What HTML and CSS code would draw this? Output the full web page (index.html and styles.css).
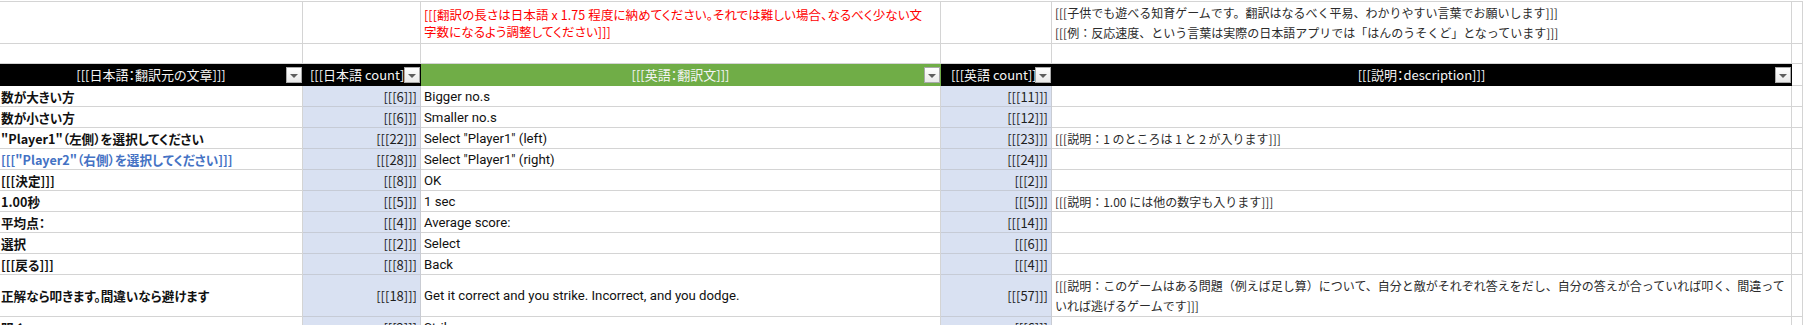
FILE: index.html
```html
<!DOCTYPE html>
<html lang="ja">
<head>
<meta charset="utf-8">
<title>翻訳シート</title>
<link rel="stylesheet" href="styles.css">
</head>
<body>
<div class="sheet">
  <!-- row 1 : notes -->
  <div class="c"></div>
  <div class="c"></div>
  <div class="c en"><div class="note-red">[[[翻訳の長さは日本語 x 1.75 程度に納めてください。それでは難しい場合、なるべく少ない文<br>字数になるよう調整してください]]]</div></div>
  <div class="c"></div>
  <div class="c desc"><div class="note">[[[子供でも遊べる知育ゲームです。翻訳はなるべく平易、わかりやすい言葉でお願いします]]]<br>[[[例：反応速度、という言葉は実際の日本語アプリでは「はんのうそくど」となっています]]]</div></div>
  <div class="c"></div>

  <!-- row 2 : empty -->
  <div class="c"></div>
  <div class="c"></div>
  <div class="c"></div>
  <div class="c"></div>
  <div class="c"></div>
  <div class="c"></div>

  <!-- header -->
  <div class="c h"><span>[[[日本語：翻訳元の文章]]]</span><i class="flt"></i></div>
  <div class="c h"><span>[[[日本語 count]]]</span><i class="flt"></i></div>
  <div class="c h green"><span>[[[英語：翻訳文]]]</span><i class="flt"></i></div>
  <div class="c h"><span>[[[英語 count]]]</span><i class="flt"></i></div>
  <div class="c h"><span>[[[説明：description]]]</span><i class="flt"></i></div>
  <div class="c"></div>

  <!-- data -->
  <div class="c ja">数が大きい方</div>
  <div class="c num">[[[6]]]</div>
  <div class="c en">Bigger no.s</div>
  <div class="c num">[[[11]]]</div>
  <div class="c desc"></div>
  <div class="c"></div>

  <div class="c ja">数が小さい方</div>
  <div class="c num">[[[6]]]</div>
  <div class="c en">Smaller no.s</div>
  <div class="c num">[[[12]]]</div>
  <div class="c desc"></div>
  <div class="c"></div>

  <div class="c ja">"Player1"（左側）を選択してください</div>
  <div class="c num">[[[22]]]</div>
  <div class="c en">Select "Player1" (left)</div>
  <div class="c num">[[[23]]]</div>
  <div class="c desc">[[[説明：1 のところは 1 と 2 が入ります]]]</div>
  <div class="c"></div>

  <div class="c ja blue">[[["Player2"（右側）を選択してください]]]</div>
  <div class="c num">[[[28]]]</div>
  <div class="c en">Select "Player1" (right)</div>
  <div class="c num">[[[24]]]</div>
  <div class="c desc"></div>
  <div class="c"></div>

  <div class="c ja">[[[決定]]]</div>
  <div class="c num">[[[8]]]</div>
  <div class="c en">OK</div>
  <div class="c num">[[[2]]]</div>
  <div class="c desc"></div>
  <div class="c"></div>

  <div class="c ja">1.00秒</div>
  <div class="c num">[[[5]]]</div>
  <div class="c en">1 sec</div>
  <div class="c num">[[[5]]]</div>
  <div class="c desc">[[[説明：1.00 には他の数字も入ります]]]</div>
  <div class="c"></div>

  <div class="c ja">平均点：</div>
  <div class="c num">[[[4]]]</div>
  <div class="c en">Average score:</div>
  <div class="c num">[[[14]]]</div>
  <div class="c desc"></div>
  <div class="c"></div>

  <div class="c ja">選択</div>
  <div class="c num">[[[2]]]</div>
  <div class="c en">Select</div>
  <div class="c num">[[[6]]]</div>
  <div class="c desc"></div>
  <div class="c"></div>

  <div class="c ja">[[[戻る]]]</div>
  <div class="c num">[[[8]]]</div>
  <div class="c en">Back</div>
  <div class="c num">[[[4]]]</div>
  <div class="c desc"></div>
  <div class="c"></div>

  <div class="c ja">正解なら叩きます。間違いなら避けます</div>
  <div class="c num">[[[18]]]</div>
  <div class="c en">Get it correct and you strike. Incorrect, and you dodge.</div>
  <div class="c num">[[[57]]]</div>
  <div class="c desc"><div class="note">[[[説明：このゲームはある問題（例えば足し算）について、自分と敵がそれぞれ答えをだし、自分の答えが合っていれば叩く、間違って<br>いれば逃げるゲームです]]]</div></div>
  <div class="c"></div>

  <div class="c ja">叩く</div>
  <div class="c num">[[[2]]]</div>
  <div class="c en">Strike</div>
  <div class="c num">[[[6]]]</div>
  <div class="c desc"></div>
  <div class="c"></div>
</div>
</body>
</html>
```

FILE: styles.css
```css
* {
  box-sizing: border-box;
}

html, body {
  margin: 0;
  padding: 0;
  background: #ffffff;
  overflow: hidden;
}

body {
  font-family: "Noto Sans CJK JP", sans-serif;
  font-size: 13px;
  color: #1a1a1a;
  font-feature-settings: "palt";
}

.sheet {
  display: grid;
  grid-template-columns: 303px 118px 520px 111px 740px 1fr;
  grid-template-rows: 42px 20px 22px repeat(9, 21px) 42px 21px;
  margin-top: 1px;
  border-top: 1px solid #d4d4d4;
}

.c {
  display: flex;
  align-items: center;
  min-width: 0;
  overflow: hidden;
  white-space: nowrap;
  border-right: 1px solid #d4d4d4;
  border-bottom: 1px solid #d4d4d4;
  line-height: 17px;
}

/* header row */
.h {
  position: relative;
  justify-content: center;
  background: #000000;
  border-color: #000000;
  color: #f4f4f4;
  font-size: 13px;
}

.h.green {
  background: #70ad47;
  border-right-color: #70ad47;
  border-bottom-color: #70ad47;
}

.flt {
  position: absolute;
  right: 0;
  top: 3px;
  width: 16px;
  height: 16px;
  border: 1px solid #a9a9a9;
  background: linear-gradient(#ffffff, #e9e9e9);
}

.flt::after {
  content: "";
  position: absolute;
  left: 3px;
  top: 6px;
  border-left: 4px solid transparent;
  border-right: 4px solid transparent;
  border-top: 4px solid #5e5e5e;
}

/* Japanese source column */
.ja {
  padding-left: 1px;
  font-size: 12.6px;
  font-weight: 700;
  color: #111111;
}

.ja.blue {
  color: #4472c4;
}

/* count columns */
.num {
  justify-content: flex-end;
  padding-right: 3px;
  background: #d9e1f2;
  border-right-color: #c9ccd3;
  border-bottom-color: #c6cbd6;
  color: #1e1e1e;
}

/* English column */
.en {
  padding-left: 3px;
  font-family: Roboto, "Noto Sans CJK JP", sans-serif;
  font-size: 13.2px;
  color: #111111;
}

.note-red {
  font-family: "Noto Sans CJK JP", sans-serif;
  font-size: 12.5px;
  font-feature-settings: "palt";
  color: #ff0000;
  letter-spacing: 0.1px;
  line-height: 17px;
}

/* description column */
.desc {
  padding-left: 3px;
  font-size: 12px;
  font-feature-settings: normal;
  color: #2b2b2b;
}

.note {
  line-height: 20px;
}
```
